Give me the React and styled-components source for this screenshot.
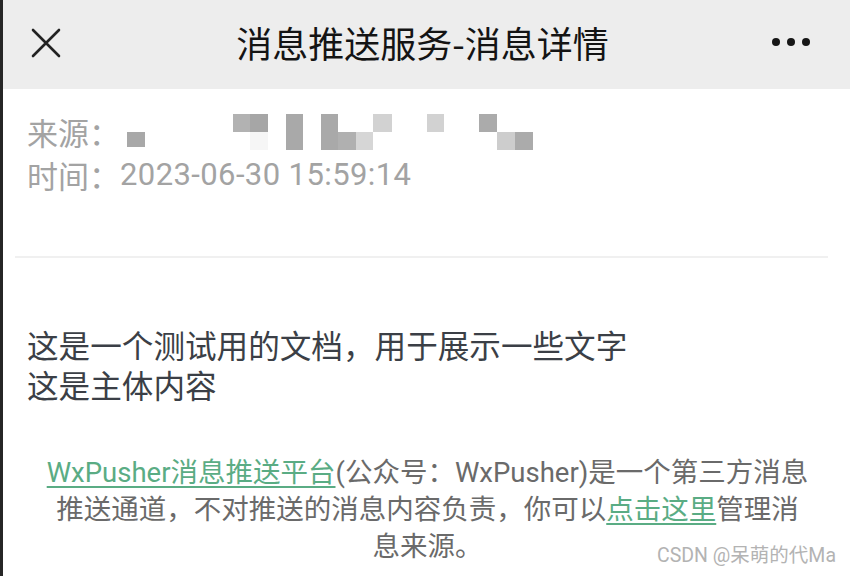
import React from 'react';
import styled, { createGlobalStyle } from 'styled-components';

const GlobalStyle = createGlobalStyle`
  html, body {
    margin: 0;
    padding: 0;
    background: #fff;
  }
  body {
    font-family: Roboto, "Noto Sans CJK SC", sans-serif;
  }
`;

const Page = styled.div`
  position: relative;
  width: 850px;
  height: 576px;
  box-sizing: border-box;
  border-left: 3px solid #262626;
  background: #fff;
  overflow: hidden;
`;

const Header = styled.header`
  height: 89px;
  background: #ededed;
  display: grid;
  grid-template-columns: 120px 1fr 120px;
  align-items: center;
`;

const CloseButton = styled.button`
  border: none;
  background: none;
  padding: 0 0 0 27px;
  margin: 0;
  display: flex;
  align-items: center;
  height: 100%;
  margin-top: -4px;
`;

const Title = styled.h1`
  margin: -5px 0 0;
  padding-right: 8px;
  text-align: center;
  font-family: "Noto Sans CJK SC", sans-serif;
  font-size: 36px;
  font-weight: 400;
  color: #141414;
`;

const MoreButton = styled.div`
  display: flex;
  justify-content: flex-end;
  gap: 7px;
  padding-right: 40px;
  margin-top: -6px;
`;

const Dot = styled.span`
  width: 8px;
  height: 8px;
  border-radius: 50%;
  background: #161616;
`;

const Content = styled.main`
  padding: 21px 22px 0 24px;
`;

const MetaRow = styled.div`
  display: flex;
  align-items: center;
  font-family: Roboto, "Noto Sans CJK SC", sans-serif;
  font-size: 31px;
  line-height: 43px;
  color: #a3a3a3;
`;

const Label = styled.span`
  font-family: "Noto Sans CJK SC", sans-serif;
`;

const Value = styled.span`
  letter-spacing: 0.4px;
`;

const Divider = styled.hr`
  border: none;
  height: 2px;
  background: #f0f0f0;
  margin: 60px 0 0 -12px;
`;

const Body = styled.div`
  margin-top: 66px;
  font-family: "Noto Sans CJK SC", sans-serif;
  font-size: 31.6px;
  line-height: 40px;
  color: #3b3f46;
`;

const Footer = styled.p`
  margin: 50px 0 0;
  text-align: center;
  font-family: Roboto, "Noto Sans CJK SC", sans-serif;
  font-size: 27.5px;
  line-height: 37px;
  color: #6a6a6a;
  white-space: nowrap;
`;

const Link = styled.a`
  color: #5aac84;
  text-decoration: underline;
  text-decoration-thickness: 2px;
  text-underline-offset: 4px;
`;

const Watermark = styled.span`
  position: absolute;
  right: 14px;
  bottom: 8px;
  font-family: Roboto, "Noto Sans CJK SC", sans-serif;
  font-size: 19.5px;
  color: #b3b3b3;
  text-shadow: 0 0 2px #fff;
`;

const mosaic = [
  [127, 132, 18, 15, '#a8a8a8'],
  [233, 114, 17, 18, '#b2b2b2'],
  [250, 114, 18, 18, '#a6a6a6'],
  [250, 132, 18, 18, '#f6f6f6'],
  [286, 114, 17, 36, '#a9a9a9'],
  [321, 114, 17, 36, '#a9a9a9'],
  [338, 132, 18, 18, '#b0b0b0'],
  [356, 132, 17, 18, '#d6d6d6'],
  [373, 114, 19, 18, '#d2d2d2'],
  [427, 114, 17, 18, '#d2d2d2'],
  [479, 114, 18, 18, '#ababab'],
  [497, 132, 18, 18, '#cdcdcd'],
  [515, 132, 18, 18, '#ababab'],
];

// censored sender name, drawn as the grey mosaic blocks
const Mosaic = () => (
  <svg width="420" height="40" viewBox="0 0 420 40" style={{ marginLeft: 7 }}>
    {mosaic.map(([x, y, w, h, c], i) => (
      <rect key={i} x={x - 127} y={y - 112} width={w} height={h} fill={c} />
    ))}
  </svg>
);

const App = () => {
  return (
    <>
      <GlobalStyle />
      <Page>
        <Header>
          <CloseButton aria-label="关闭">
            <svg width="32" height="32" viewBox="0 0 32 32">
              <path d="M3 3 L29 29 M29 3 L3 29" stroke="#222" strokeWidth="2.6" strokeLinecap="round" />
            </svg>
          </CloseButton>
          <Title>消息推送服务-消息详情</Title>
          <MoreButton>
            <Dot />
            <Dot />
            <Dot />
          </MoreButton>
        </Header>

        <Content>
          <MetaRow>
            <Label>来源：</Label>
            <Mosaic />
          </MetaRow>
          <MetaRow>
            <Label>时间：</Label>
            <Value>2023-06-30 15:59:14</Value>
          </MetaRow>

          <Divider />

          <Body>
            这是一个测试用的文档，用于展示一些文字
            <br />
            这是主体内容
          </Body>

          <Footer>
            <Link href="#">WxPusher消息推送平台</Link>(公众号：WxPusher)是一个第三方消息
            <br />
            推送通道，不对推送的消息内容负责，你可以<Link href="#">点击这里</Link>管理消
            <br />
            息来源。
          </Footer>
        </Content>

        <Watermark>CSDN @呆萌的代Ma</Watermark>
      </Page>
    </>
  );
};

export default App;
